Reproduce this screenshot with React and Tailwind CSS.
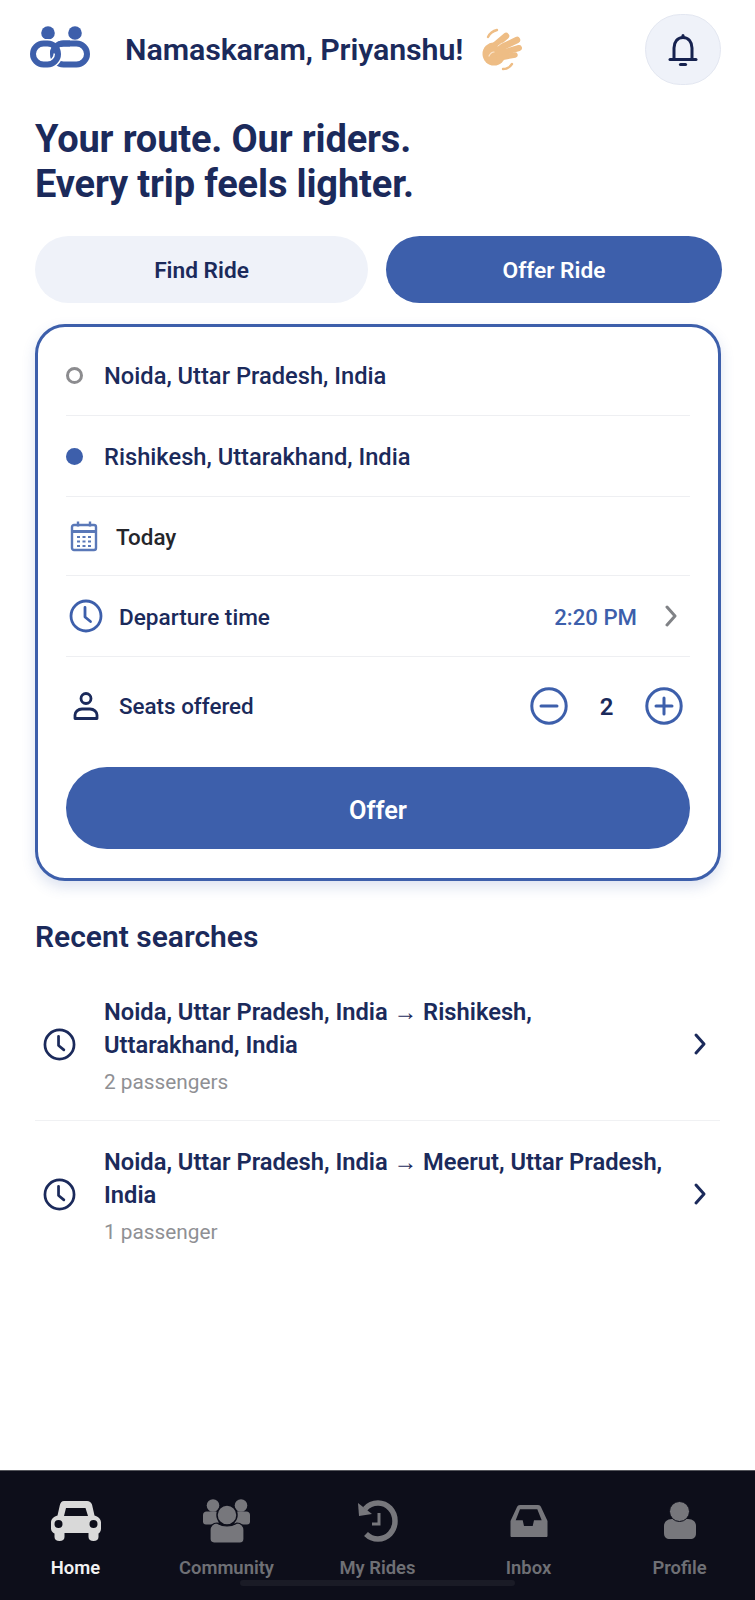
const ClockIcon = ({ className }) => (
  <svg viewBox="0 0 34 34" fill="none" stroke="currentColor" strokeWidth="2.8" strokeLinecap="round" strokeLinejoin="round" className={className}>
    <circle cx="17" cy="17" r="15" />
    <path d="M16 8.5v9.5l5.5 4.5" />
  </svg>
);

const Chevron = ({ className }) => (
  <svg viewBox="0 0 14 22" fill="none" stroke="currentColor" strokeWidth="3" strokeLinecap="round" strokeLinejoin="round" className={className}>
    <path d="M3 2l8 9-8 9" />
  </svg>
);

const Logo = () => (
  <svg viewBox="0 0 64 48" className="w-[64px] h-[48px] shrink-0" fill="none">
    <circle cx="20" cy="7" r="6.8" fill="#3d5fab" />
    <circle cx="47" cy="7" r="6.8" fill="#3d5fab" />
    <rect x="25" y="17.500" width="34" height="21" rx="10.500" stroke="#3d5fab" strokeWidth="6" />
    <rect x="5" y="17.500" width="25" height="21" rx="10.500" stroke="#ffffff" strokeWidth="9" />
    <rect x="5" y="17.500" width="25" height="21" rx="10.500" stroke="#3d5fab" strokeWidth="6" />
    <path d="M42 17.500H35a10 10 0 0 0-10 10" stroke="#3d5fab" strokeWidth="6" />
  </svg>
);

const Hand = () => (
  <svg viewBox="0 0 42 44" className="w-[42px] h-[44px] ml-[18px] shrink-0" fill="none" stroke="#eebd85" strokeLinecap="round">
    <path d="M7 9 C9 5 12 3 16 2" strokeWidth="2.400" />
    <path d="M22 41 C26 41 29 39 31 36" strokeWidth="2.400" />
    <ellipse cx="13" cy="26" rx="11.500" ry="11.500" fill="#eebd85" stroke="none" />
    <path d="M12 19L25 8" strokeWidth="6.500" />
    <path d="M15 22L36 12" strokeWidth="6.500" />
    <path d="M17 26L38 20" strokeWidth="6" />
    <path d="M18 30L34 27" strokeWidth="5.500" />
    <path d="M13 24 C10 24 9 26 8 28" stroke="#fbe6cf" strokeWidth="1.200" />
    <path d="M17 18L21 15" stroke="#fbe6cf" strokeWidth="1" />
  </svg>
);

const Bell = () => (
  <svg viewBox="0 0 30 34" className="w-[30px] h-[34px]" fill="none" stroke="#16224f" strokeWidth="3" strokeLinecap="round" strokeLinejoin="round">
    <path d="M2 26.500h26" />
    <path d="M6 26.500V15c0-6 3.500-10.500 9-10.500S24 9 24 15v11.500" />
    <path d="M15 4.500V2.500" />
    <path d="M12.500 31.500h5" strokeWidth="3.200" />
  </svg>
);

const CalendarIcon = () => (
  <svg viewBox="0 0 28 32" className="w-[28px] h-[32px] shrink-0" fill="none" stroke="#5a78b8" strokeWidth="2.400">
    <rect x="2" y="5" width="24" height="25" rx="2" />
    <path d="M2 11.500h24" strokeWidth="3" />
    <path d="M8 1.500v5M20 1.500v5" />
    <path d="M7 17h3M12.500 17h3M18 17h3M7 21.500h3M12.500 21.500h3M18 21.500h3M7 26h3M12.500 26h3M18 26h3" strokeWidth="2.200" />
  </svg>
);

const PersonIcon = () => (
  <svg viewBox="0 0 26 28" className="w-[26px] h-[28px]" fill="none" stroke="#1b2a5b" strokeWidth="2.800" strokeLinejoin="round">
    <circle cx="13" cy="6.500" r="5" />
    <path d="M2 26.500v-3.500c0-3 3-6 7-6h8c4 0 7 3 7 6v3.500z" />
  </svg>
);

const RoundBtn = ({ plus }) => (
  <svg viewBox="0 0 38 38" className="w-[38px] h-[38px]" fill="none" stroke="#3d5fab" strokeWidth="3" strokeLinecap="round">
    <circle cx="19" cy="19" r="17.200" />
    <path d="M11 19h16" />
    {plus && <path d="M19 11v16" />}
  </svg>
);

const CarNav = () => (
  <svg viewBox="0 0 50 40" className="w-[50px] h-[40px]" fill="#d9d9d9">
    <path fillRule="evenodd" d="M13 0h23c2.500 0 4 1.200 5 3.500l2.500 11c3.500 1 6.500 3.500 6.500 7v6c0 2.500-1 4-2.500 5V36c0 2.500-2 4-5 4s-5-1.500-5-4v-4H13.500v4c0 2.500-2 4-5 4s-5-1.500-5-4v-3.500C1.500 31.500 0 30 0 27.500v-6c0-3.500 3-6 6.500-7l2.500-11C10 1.200 10.500 0 13 0zM15 7l-2 8h24l-2.500-8zM7.500 19a4 4 0 1 0 0 8 4 4 0 0 0 0-8zM42.500 19a4 4 0 1 0 0 8 4 4 0 0 0 0-8z" />
  </svg>
);

const CommunityNav = () => (
  <svg viewBox="0 0 47 44" className="w-[47px] h-[44px]" fill="#77777c">
    <circle cx="10" cy="6.500" r="6.300" />
    <circle cx="38" cy="6.500" r="6.300" />
    <path d="M0 16c0-2 1.500-3.500 3.500-3.500h9c2 0 3 1.500 3 3.500v9.500H3c-2 0-3-1-3-3zM31.500 16c0-2 1-3.500 3-3.500h9c2 0 3.500 1.500 3.500 3.500v6.500c0 2-1 3-3 3H31.500z" />
    <circle cx="24" cy="16" r="10" stroke="#0d0e1a" strokeWidth="1.500" />
    <path d="M7 40V31c0-4 3-7 7-7 3 2 6 3 10 3s7-1 10-3c4 0 7 3 7 7v9c0 2-1 4-4 4H11c-3 0-4-2-4-4z" stroke="#0d0e1a" strokeWidth="1.200" />
  </svg>
);

const RidesNav = () => (
  <svg viewBox="0 0 40 42" className="w-[40px] h-[42px]" fill="none" stroke="#77777c">
    <path d="M7 9C10 5.500 15 3 20 3c9.500 0 17 8 17 18s-7.500 18-17 18c-5 0-9-2-12-5" strokeWidth="5.500" />
    <path d="M0 3l1 13 13-2z" fill="#77777c" stroke="none" />
    <path d="M21 13v11h-7" strokeWidth="3" />
  </svg>
);

const InboxNav = () => (
  <svg viewBox="0 0 38 32" className="w-[38px] h-[32px]" fill="#77777c">
    <path fillRule="evenodd" d="M10 0h18c1.500 0 2.500.800 3 2l6.500 14v15c0 .500-.500 1-1 1h-35c-.500 0-1-.500-1-1V16L7 2c.500-1.200 1.500-2 3-2zM10 4.300L5.700 15.300H12.700L14 21h8.700L24 15.300h7.700L27.300 4.300z" />
  </svg>
);

const ProfileNav = () => (
  <svg viewBox="0 0 32 40" className="w-[32px] h-[40px]" fill="#77777c">
    <path d="M0 32V25c0-4 3-7 8-7h16c5 0 8 3 8 7v7c0 4-2 6-6 6H6c-4 0-6-2-6-6z" />
    <circle cx="15.500" cy="10.500" r="10" stroke="#0d0e1a" strokeWidth="1" />
  </svg>
);

const navItems = [
  { label: "Home", Icon: CarNav, active: true },
  { label: "Community", Icon: CommunityNav },
  { label: "My Rides", Icon: RidesNav },
  { label: "Inbox", Icon: InboxNav },
  { label: "Profile", Icon: ProfileNav },
];

const recent = [
  { lines: "Noida, Uttar Pradesh, India → Rishikesh, Uttarakhand, India", sub: "2 passengers" },
  { lines: "Noida, Uttar Pradesh, India → Meerut, Uttar Pradesh, India", sub: "1 passenger" },
];

export default function App() {
  return (
    <div className="w-[755px] h-[1600px] bg-white flex flex-col font-['Roboto',sans-serif] text-[#1b2a5b]">
      {/* Header */}
      <div className="flex items-center h-[71px] mt-[14px] pl-[28px] pr-[34px]">
        <Logo />
        <h1 className="ml-[33px] text-[30.400px] font-semibold tracking-[-0.1px]">Namaskaram, Priyanshu!</h1>
        <Hand />
        <button className="ml-auto w-[76px] h-[71px] rounded-full bg-[#eff2f9] border border-[#e3e7f1] flex items-center justify-center">
          <Bell />
        </button>
      </div>

      <div className="px-[35px] pt-[32px] flex flex-col">
        <h2 className="text-[38px] leading-[45px] font-bold tracking-[-0.15px]">
          Your route. Our riders.
          <br />
          Every trip feels lighter.
        </h2>

        {/* Tabs */}
        <div className="flex gap-[18px] mt-[29px]">
          <button className="w-[333px] shrink-0 h-[67px] pt-[3px] rounded-full bg-[#eff2f9] text-[22.700px] font-semibold">Find Ride</button>
          <button className="w-[336px] shrink-0 h-[67px] pt-[3px] rounded-full bg-[#3d5fab] text-[22.700px] font-semibold text-white">Offer Ride</button>
        </div>

        {/* Form card */}
        <div className="mt-[21px] h-[557px] w-[686px] rounded-[30px] border-[3px] border-[#3d5fab] bg-white px-[28px] pt-[8px] shadow-[0_6px_14px_rgba(61,95,171,0.18)]">
          <div className="h-[81px] flex items-center border-b border-[#eeeff2]">
            <span className="w-[17px] h-[17px] rounded-full border-[3px] border-[#8c8c8f] bg-white" />
            <span className="ml-[21px] pt-[3px] text-[23.700px] font-medium">Noida, Uttar Pradesh, India</span>
          </div>
          <div className="h-[81px] flex items-center border-b border-[#eeeff2]">
            <span className="w-[17px] h-[17px] rounded-full bg-[#3d5fab]" />
            <span className="ml-[21px] pt-[4px] text-[23.700px] font-medium">Rishikesh, Uttarakhand, India</span>
          </div>
          <div className="h-[79px] flex items-center border-b border-[#eeeff2] pl-[4px]">
            <CalendarIcon />
            <span className="ml-[18px] pt-[3px] text-[22.400px] font-medium text-[#25262b]">Today</span>
          </div>
          <div className="h-[81px] flex items-center border-b border-[#eeeff2] pl-[3px]">
            <ClockIcon className="w-[34px] h-[34px] text-[#3d5fab]" />
            <span className="ml-[16px] pt-[3px] text-[22.600px] font-medium">Departure time</span>
            <span className="ml-auto pt-[3px] text-[22.200px] font-medium text-[#3d5fab]">2:20 PM</span>
            <Chevron className="ml-[27px] mr-[12px] w-[14px] h-[22px] text-[#808286]" />
          </div>
          <div className="h-[97px] flex items-center pl-[7px]">
            <PersonIcon />
            <span className="ml-[20px] pt-[2px] text-[22.400px] font-medium">Seats offered</span>
            <div className="ml-auto flex items-center mr-[7px]">
              <RoundBtn />
              <span className="w-[77px] pt-[2px] text-center text-[24px] font-semibold">2</span>
              <RoundBtn plus />
            </div>
          </div>
          <button className="mt-[13px] w-full h-[82px] pt-[5px] rounded-full bg-[#3d5fab] text-white text-[25.300px] font-semibold">Offer</button>
        </div>

        {/* Recent searches */}
        <h3 className="mt-[38px] text-[30px] leading-[36px] font-semibold">Recent searches</h3>
        <div className="mt-[16px] flex flex-col">
          {recent.map((r, i) => (
            <div key={i} className={`flex items-center pt-[25px] pb-[23px] ${i === 0 ? "border-b border-[#f0f1f3]" : ""}`}>
              <ClockIcon className="w-[33px] h-[33px] ml-[8px] mb-[4px] shrink-0 text-[#1b2a5b]" />
              <div className="ml-[28px] flex-1">
                <p className="text-[23.700px] leading-[33px] font-semibold">{r.lines}</p>
                <p className="mt-[5px] text-[20.800px] leading-[30px] text-[#8f9094]">{r.sub}</p>
              </div>
              <Chevron className="w-[14px] h-[24px] mr-[13px] ml-[21px] mb-[6px] shrink-0 text-[#1b2a5b]" />
            </div>
          ))}
        </div>
      </div>

      {/* Bottom nav */}
      <div className="relative mt-auto h-[130px] bg-[#0d0e1a] border-t border-[#55565c] grid grid-cols-5 pt-[27px]">
        {navItems.map(({ label, Icon, active }) => (
          <div key={label} className="flex flex-col items-center">
            <div className="h-[46px] flex items-center justify-center">
              <Icon />
            </div>
            <span className={`mt-[12px] text-[18.400px] leading-[24px] font-semibold ${active ? "text-[#f2f2f2]" : "text-[#6f7075]"}`}>{label}</span>
          </div>
        ))}
        <div className="absolute left-[240px] bottom-[14px] w-[275px] h-[6px] rounded-full bg-[#1a1b26]" />
      </div>
    </div>
  );
}
